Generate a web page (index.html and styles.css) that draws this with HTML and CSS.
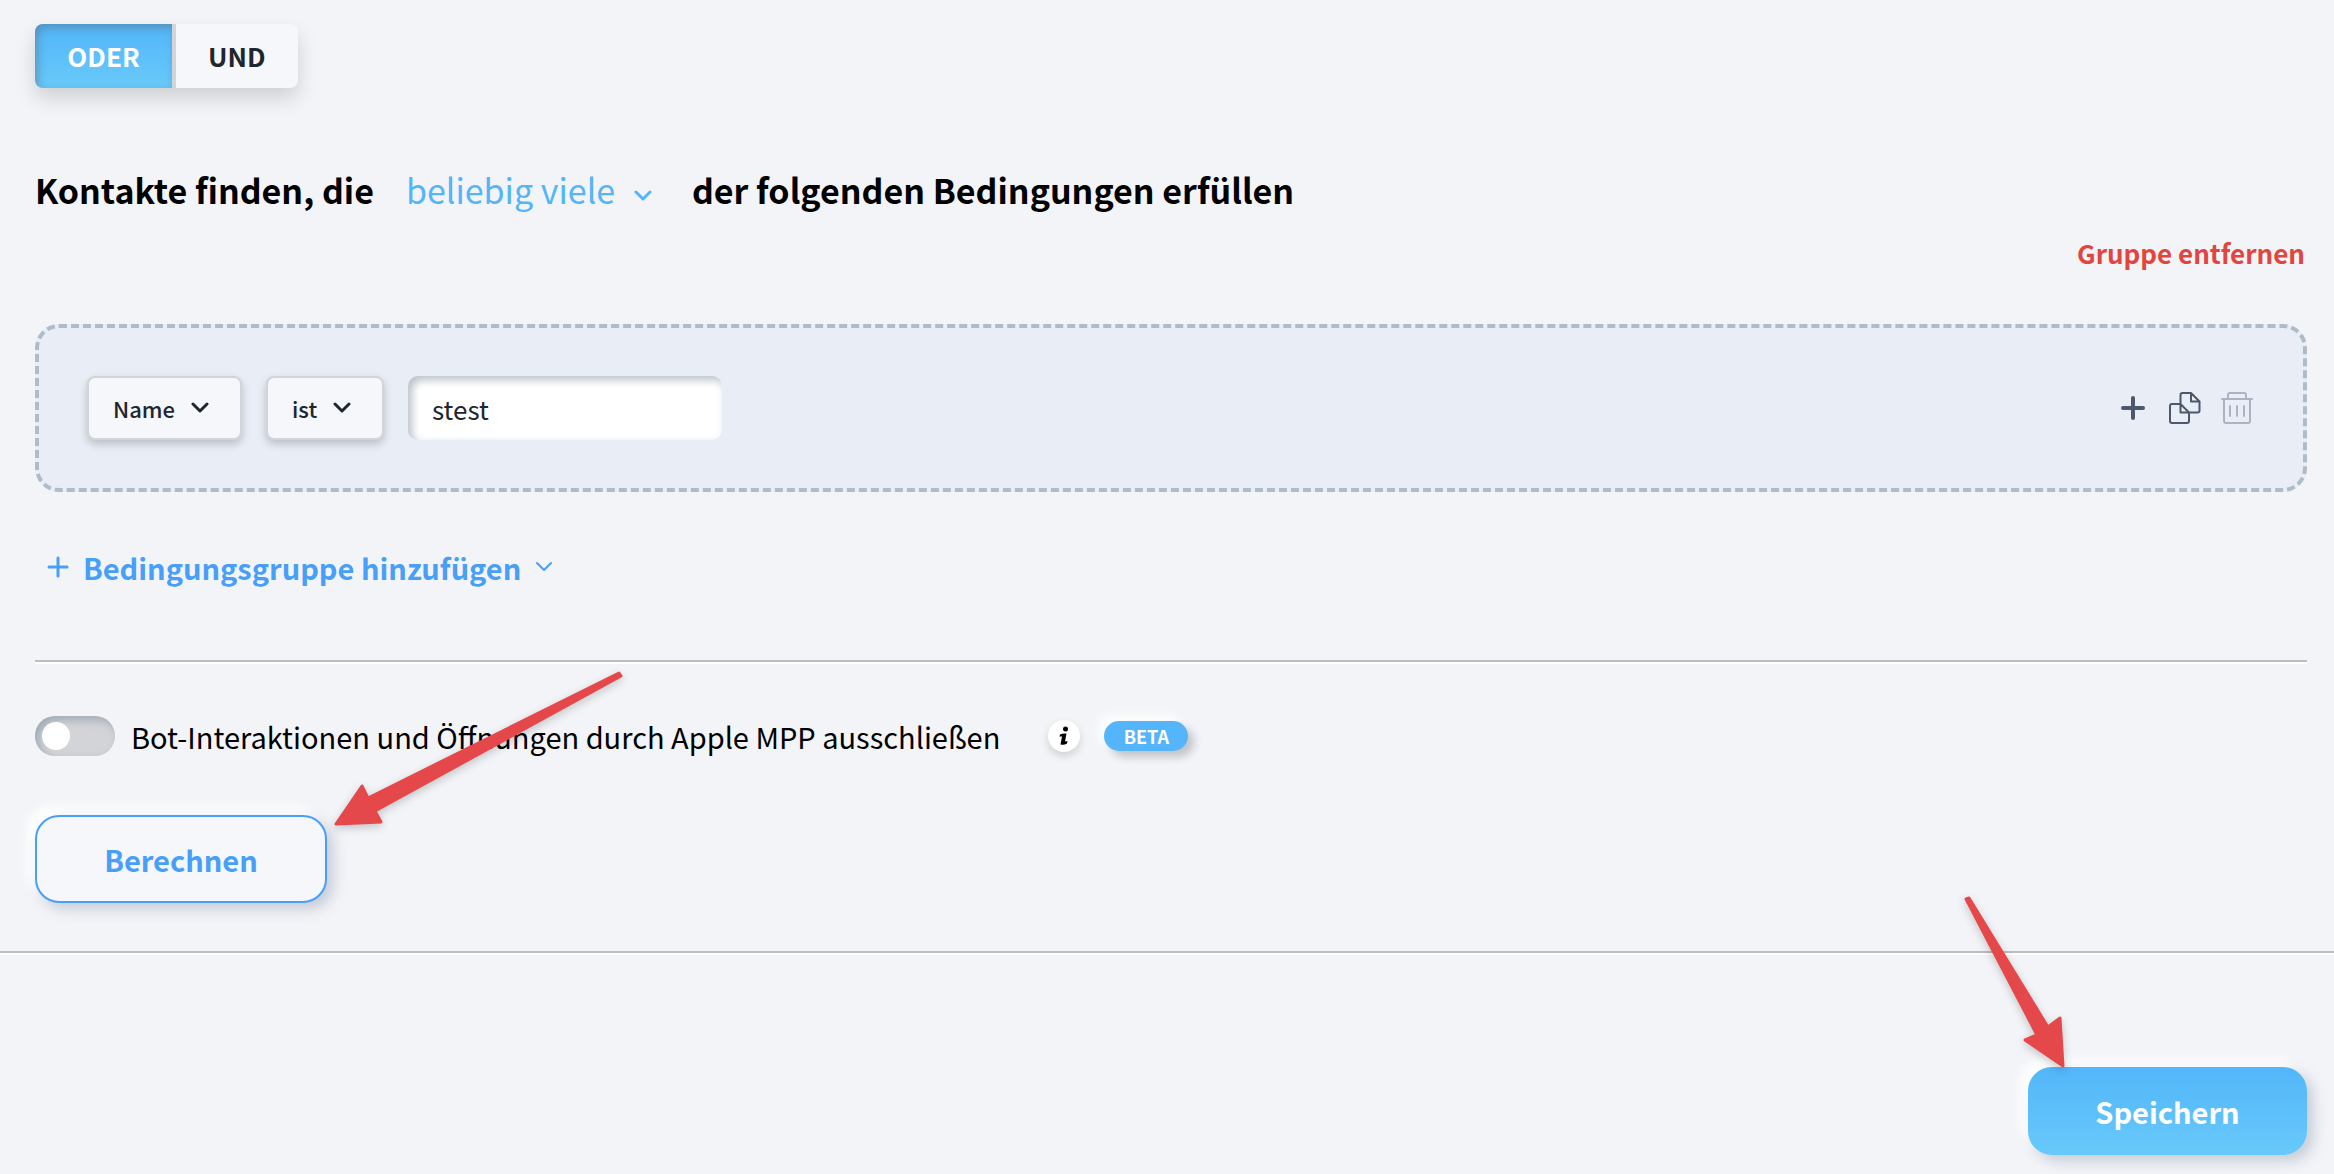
FILE: index.html
```html
<!DOCTYPE html>
<html lang="de">
<head>
  <meta charset="UTF-8">
  <meta name="viewport" content="width=device-width, initial-scale=1.0">
  <title>Kontakte filtern</title>
  <link rel="stylesheet" href="styles.css">
</head>
<body>
  <form class="segment">
    <div class="switch">
      <input type="radio" name="verknuepfung" id="oder" checked>
      <label for="oder">ODER</label>
      <input type="radio" name="verknuepfung" id="und">
      <label for="und">UND</label>
    </div>

    <div class="satz">
      <label for="anzahl">Kontakte finden, die</label>
      <div class="dropdown dropdown-text">
        <select id="anzahl">
          <option>beliebig viele</option>
          <option>alle</option>
        </select>
        <svg class="pfeil" width="18" height="12" viewBox="0 0 18 12"><path d="M2 2l7 7 7-7"/></svg>
      </div>
      <span>der folgenden Bedingungen erfüllen</span>
    </div>

    <button type="button" class="entfernen">Gruppe entfernen</button>

    <div class="gruppe">
      <div class="dropdown dropdown-box">
        <select aria-label="Feld">
          <option>Name</option>
        </select>
        <svg class="pfeil" width="18" height="12" viewBox="0 0 18 12"><path d="M2 2l7 7 7-7"/></svg>
      </div>
      <div class="dropdown dropdown-box dropdown-kurz">
        <select aria-label="Vergleich">
          <option>ist</option>
        </select>
        <svg class="pfeil" width="18" height="12" viewBox="0 0 18 12"><path d="M2 2l7 7 7-7"/></svg>
      </div>
      <input type="text" class="wert" aria-label="Wert" value="stest">

      <div class="aktionen">
        <button type="button" aria-label="Bedingung hinzufügen">
          <svg class="icon-plus" width="32" height="32" viewBox="0 0 32 32"><path d="M16 6v20M6 16h20"/></svg>
        </button>
        <button type="button" aria-label="Bedingung kopieren">
          <svg class="icon-kopie" width="32" height="32" viewBox="0 0 32 32">
            <path d="M11.500 12H3q-2 0-2 2V29q0 2 2 2h15q2 0 2-2v-8.500M11.500 12V20.500H20zM11.500 12V3q0-2 2-2H22l8.500 8.500V18.500q0 2-2 2H20M22 1v8.500h8.500"/>
          </svg>
        </button>
        <button type="button" aria-label="Bedingung löschen" disabled>
          <svg class="icon-korb" width="32" height="32" viewBox="0 0 32 32">
            <path d="M1 7h30M3 7v22q0 2 2 2h22q2 0 2-2V7M7 7V3q0-2 2-2h14q2 0 2 2v4M9 14v10M16 14v10M23 14v10"/>
          </svg>
        </button>
      </div>
    </div>

    <button type="button" class="hinzufuegen">
      <svg class="plus" width="22" height="22" viewBox="0 0 22 22"><path d="M11 2v18M2 11h18"/></svg>
      Bedingungsgruppe hinzufügen
      <svg class="pfeil" width="18" height="12" viewBox="0 0 18 12"><path d="M2 2l7 7 7-7"/></svg>
    </button>

    <hr>

    <div class="option">
      <input type="checkbox" id="bots" class="toggle">
      <label for="bots">Bot-Interaktionen und Öffnungen durch Apple MPP ausschließen</label>
      <button type="button" class="info" aria-label="Info">
        <svg width="12" height="20" viewBox="0 0 12 20"><circle cx="7.500" cy="3" r="2.500"/><path d="M2 8.500Q5 7 8.500 7.500L7 15.500l2.500-.5-.5 2.500Q6 19.500 2.500 18.500L4 10.500H1.500z"/></svg>
      </button>
      <span class="beta">BETA</span>
    </div>

    <div class="berechnen-zeile">
      <button type="button" class="knopf knopf-hell">Berechnen</button>
      <svg class="zeiger zeiger-berechnen" width="300" height="164" viewBox="0 0 300 164">
        <path d="M286 3L35 128 29 116 3 154 48 152 42 141 288 6z"/>
      </svg>
    </div>
  </form>

  <hr>

  <footer class="fuss">
    <div class="speichern-zeile">
      <button type="submit" class="knopf knopf-blau">Speichern</button>
      <svg class="zeiger zeiger-speichern" width="108" height="180" viewBox="0 0 108 180">
        <path d="M9 5L88 134 100 125 103 173 65 147 77 142 6 6z"/>
      </svg>
    </div>
  </footer>
</body>
</html>
```

FILE: styles.css
```css
* {
  box-sizing: border-box;
}
body {
  margin: 0;
  background: #f3f4f8;
  color: #000;
  font-family: "Noto Sans CJK SC", "Open Sans", sans-serif;
  font-size: 29px;
  line-height: 40px;
}
button, input, select {
  font: inherit;
  color: inherit;
}
button {
  padding: 0;
  border: none;
  background: none;
  cursor: pointer;
}
svg {
  display: block;
  flex: none;
  fill: none;
  stroke: currentColor;
  stroke-width: 3;
  stroke-linecap: round;
  stroke-linejoin: round;
}
hr {
  height: 4px;
  margin: 0;
  border: none;
  border-top: 2px solid #bdbdbd;
  background: #fff;
}
.segment {
  display: flex;
  flex-direction: column;
  align-items: flex-start;
  padding: 24px 27px 48px 35px;
}
.segment hr {
  align-self: stretch;
}

/* ODER / UND */
.switch {
  display: flex;
  border-radius: 8px;
  background: #f6f7fb;
  box-shadow: 0 10px 20px rgba(0, 0, 0, 0.15);
  color: #20262e;
  font-size: 26px;
  font-weight: 700;
  line-height: 64px;
}
.switch input {
  position: absolute;
  opacity: 0;
}
.switch label {
  min-width: 121px;
  padding: 0 32px;
  border-radius: 0 8px 8px 0;
  text-align: center;
  cursor: pointer;
}
.switch label:first-of-type {
  min-width: 141px;
  border-right: 4px solid #d3d4d8;
  border-radius: 8px 0 0 8px;
}
.switch input:checked + label {
  background: linear-gradient(#52b6fa, #68c9f9) padding-box;
  box-shadow: inset 3px 4px 8px rgba(90, 110, 130, 0.5);
  color: #fff;
}

.satz {
  display: flex;
  align-items: center;
  gap: 32px;
  margin-top: 78px;
  font-size: 34px;
  font-weight: 700;
  line-height: 48px;
}
.dropdown {
  display: grid;
  align-items: center;
}
.dropdown > * {
  grid-area: 1 / 1;
}
.dropdown .pfeil {
  justify-self: end;
  pointer-events: none;
}
.dropdown select {
  appearance: none;
  border: none;
  background: none;
  cursor: pointer;
}
.dropdown-text {
  margin-right: 8px;
  color: #54b5fa;
  font-weight: 400;
}
.dropdown-text select {
  height: 48px;
  padding: 0 36px 0 0;
}
.dropdown-text .pfeil {
  align-self: end;
  margin: 0 0 12px;
}

.entfernen {
  align-self: flex-end;
  margin-top: 23px;
  padding-right: 2px;
  color: #e2453f;
  font-size: 26px;
  font-weight: 700;
  line-height: 32px;
}

.gruppe {
  display: flex;
  align-items: center;
  align-self: stretch;
  gap: 24px;
  margin-top: 55px;
  padding: 48px;
  border: 4px dashed #adbcc7;
  border-radius: 24px;
  background: #e8edf6;
  color: #20262e;
}
.dropdown-box {
  width: 155px;
  height: 64px;
  border: 2px solid #d3d4d8;
  border-radius: 8px;
  background: #f6f7fb;
  box-shadow: 0 4px 8px rgba(0, 0, 0, 0.2);
  font-size: 22px;
  font-weight: 500;
}
.dropdown-kurz {
  width: 118px;
}
.dropdown-box select {
  height: 60px;
  padding: 0 0 0 24px;
}
.dropdown-box .pfeil {
  margin-right: 31px;
}
.wert {
  width: 314px;
  height: 64px;
  padding: 0 24px;
  border: none;
  border-radius: 10px;
  background: #fff;
  box-shadow: inset 4px 4px 8px rgba(100, 115, 135, 0.45);
  font-size: 26px;
}
.aktionen {
  display: flex;
  gap: 20px;
  margin-left: auto;
  padding-right: 2px;
  color: #4c586c;
}
.icon-plus {
  stroke-width: 4;
}
.icon-kopie, .icon-korb {
  stroke-width: 2;
}
.aktionen button:disabled {
  color: #adb3c0;
}

.hinzufuegen {
  display: flex;
  align-items: center;
  gap: 14px;
  margin: 55px 0 73px 12px;
  color: #489ff8;
  font-weight: 700;
}
.hinzufuegen .pfeil {
  stroke-width: 2;
}

.option {
  display: flex;
  align-items: center;
  margin-top: 52px;
}
.toggle {
  appearance: none;
  display: flex;
  align-items: center;
  width: 80px;
  height: 40px;
  margin: 0 16px 0 0;
  padding: 0 7px;
  border-radius: 20px;
  background: #d3d4d8;
  box-shadow: inset 4px 4px 8px rgba(110, 130, 145, 0.5);
  cursor: pointer;
}
.toggle::before {
  content: "";
  width: 28px;
  height: 28px;
  border-radius: 50%;
  background: #fff;
}
.toggle:checked {
  justify-content: flex-end;
  background: #54b5fa;
}
.info {
  display: grid;
  place-items: center;
  width: 32px;
  height: 32px;
  margin: 0 24px 0 48px;
  border-radius: 50%;
  background: #fff;
  box-shadow: 0 4px 8px rgba(0, 0, 0, 0.15);
}
.info svg {
  fill: currentColor;
  stroke: none;
}
.beta {
  min-width: 84px;
  padding: 0 16px;
  border-radius: 15px;
  background: #54b5fa;
  box-shadow: 6px 6px 8px rgba(0, 0, 0, 0.2), -6px -6px 12px #fff;
  color: #fff;
  font-size: 18px;
  font-weight: 700;
  line-height: 30px;
  text-align: center;
}

.knopf {
  height: 88px;
  min-width: 279px;
  padding: 0 64px;
  border-radius: 24px;
  box-shadow: 6px 6px 14px rgba(90, 110, 135, 0.3), -8px -8px 12px #fff;
  font-weight: 700;
}
.knopf-hell {
  min-width: 292px;
  border: 2px solid #489ff8;
  background: #f6f7fb;
  color: #489ff8;
}
.knopf-blau {
  background: linear-gradient(#52b6fa, #68c9f9);
  color: #fff;
}
.berechnen-zeile {
  position: relative;
  margin-top: 59px;
}
.fuss {
  display: flex;
  justify-content: flex-end;
  padding: 112px 27px 19px;
}
.speichern-zeile {
  position: relative;
}

/* rote Pfeile zeigen auf die beiden Knöpfe */
.zeiger {
  position: absolute;
  fill: #e5484a;
  stroke: #e5484a;
  filter: drop-shadow(0 3px 4px rgba(0, 0, 0, 0.2));
  pointer-events: none;
}
.zeiger-berechnen {
  left: 100%;
  bottom: 69px;
  margin-left: 6px;
}
.zeiger-speichern {
  left: -68px;
  bottom: 82px;
}
```
